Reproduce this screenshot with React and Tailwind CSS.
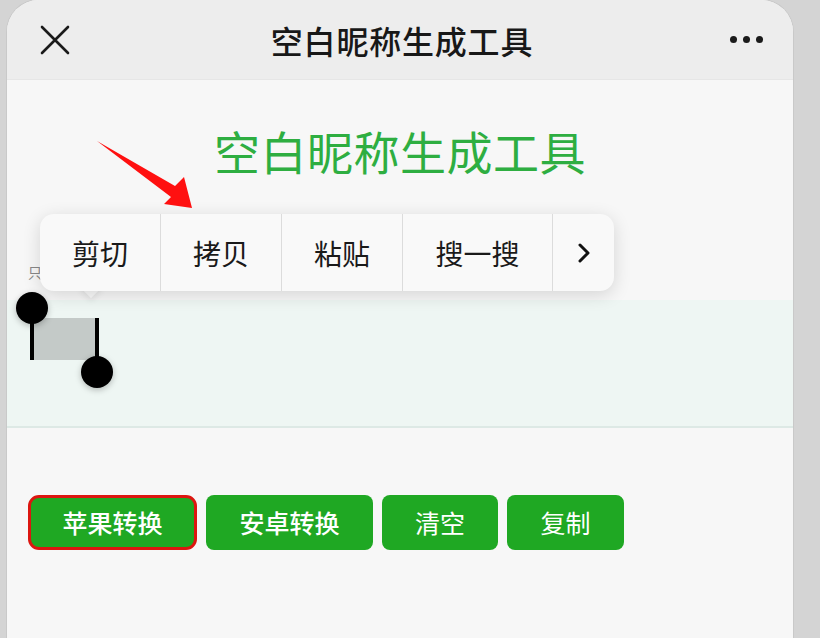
import React from 'react'

const menuItems = [
    { label: '剪切', w: 'w-[121px]' },
    { label: '拷贝', w: 'w-[121px]' },
    { label: '粘贴', w: 'w-[121px]' },
    { label: '搜一搜', w: 'w-[150px]' },
]

const App = () => {
    return (
        <div className="relative w-[820px] h-[638px] overflow-hidden bg-[#d4d4d4] pl-[7px] pr-[27px]" style={{ fontFamily: '"Noto Sans CJK SC", "Noto Sans", sans-serif' }}>
            <div className="relative h-full rounded-t-[32px] bg-[#f7f7f7] overflow-hidden flex flex-col shadow-[0_0_0_1px_#c9c9c9]">
                {/* header */}
                <div className="h-[80px] shrink-0 bg-[#ededed] flex items-center justify-between pl-[33px] pr-[30px] border-b border-[#e6e6e6]">
                    <svg width="30" height="30" viewBox="0 0 30 30">
                        <path d="M2 2 L28 28 M28 2 L2 28" stroke="#1a1a1a" strokeWidth="2.6" strokeLinecap="round" />
                    </svg>
                    <div className="text-[32px] font-medium text-[#181818] tracking-[0.8px] pl-[4px]">空白昵称生成工具</div>
                    <div className="flex gap-[6px] items-center">
                        <span className="w-[7px] h-[7px] rounded-full bg-[#1a1a1a]" />
                        <span className="w-[7px] h-[7px] rounded-full bg-[#1a1a1a]" />
                        <span className="w-[7px] h-[7px] rounded-full bg-[#1a1a1a]" />
                    </div>
                </div>

                {/* body */}
                <div className="flex flex-col">
                    <h1 className="mt-[42px] h-[56px] leading-[56px] text-center text-[46px] text-[#2eae41] tracking-[0.5px]">空白昵称生成工具</h1>
                    <div className="mt-[84px] h-[20px] leading-[20px] pl-[21px] text-[14px] text-[#888]">只</div>
                    <div className="mt-[18px] h-[128px] bg-[#eef6f3] border-b-2 border-[#dde9e5]" />
                    <div className="mt-[67px] flex gap-[9px] pl-[21px]">
                        <button className="w-[169px] h-[55px] rounded-[11px] border-[3px] border-[#dc1610] bg-[#1fa823] text-white text-[25px] font-medium">苹果转换</button>
                        <button className="w-[167px] h-[55px] rounded-[8px] bg-[#1fa823] text-white text-[25px] font-medium">安卓转换</button>
                        <button className="w-[116px] h-[55px] rounded-[8px] bg-[#1fa823] text-white text-[25px]">清空</button>
                        <button className="w-[117px] h-[55px] rounded-[8px] bg-[#1fa823] text-white text-[25px]">复制</button>
                    </div>
                </div>

                {/* selection handles */}
                <div className="absolute left-[26px] top-[318px] w-[64px] h-[42px] bg-[#c4cac8]" />
                <div className="absolute left-[23px] top-[308px] w-[4px] h-[52px] bg-black" />
                <div className="absolute left-[9px] top-[292px] w-[32px] h-[32px] rounded-full bg-black shadow-[0_2px_6px_rgba(0,0,0,0.25)]" />
                <div className="absolute left-[88px] top-[318px] w-[4px] h-[54px] bg-black" />
                <div className="absolute left-[74px] top-[356px] w-[32px] h-[32px] rounded-full bg-black shadow-[0_2px_6px_rgba(0,0,0,0.25)]" />

                {/* context menu */}
                <div className="absolute left-[76px] top-[279px] w-[16px] h-[16px] rotate-45 bg-[#f9f9f9] shadow-[2px_2px_6px_rgba(0,0,0,0.08)]" />
                <div className="absolute left-[33px] top-[214px] h-[77px] flex rounded-[14px] bg-[#f9f9f9] shadow-[0_4px_18px_rgba(0,0,0,0.14)]">
                    {menuItems.map((item) => (
                        <div key={item.label} className={`${item.w} h-full flex items-center justify-center border-r border-[#dcdcdc] text-[28px] text-[#1a1a1a]`}>
                            {item.label}
                        </div>
                    ))}
                    <div className="w-[61px] h-full flex items-center justify-center">
                        <svg width="14" height="22" viewBox="0 0 14 22">
                            <path d="M3 3 L11 11 L3 19" fill="none" stroke="#111" strokeWidth="3" strokeLinecap="round" strokeLinejoin="round" />
                        </svg>
                    </div>
                </div>
            </div>

            {/* red arrow */}
            <svg className="absolute left-0 top-0 pointer-events-none" width="820" height="638">
                <polygon points="97,141 175,186 184,177 192,208 164,204 171,197" fill="#ff1010" />
            </svg>
        </div>
    )
}

export default App
